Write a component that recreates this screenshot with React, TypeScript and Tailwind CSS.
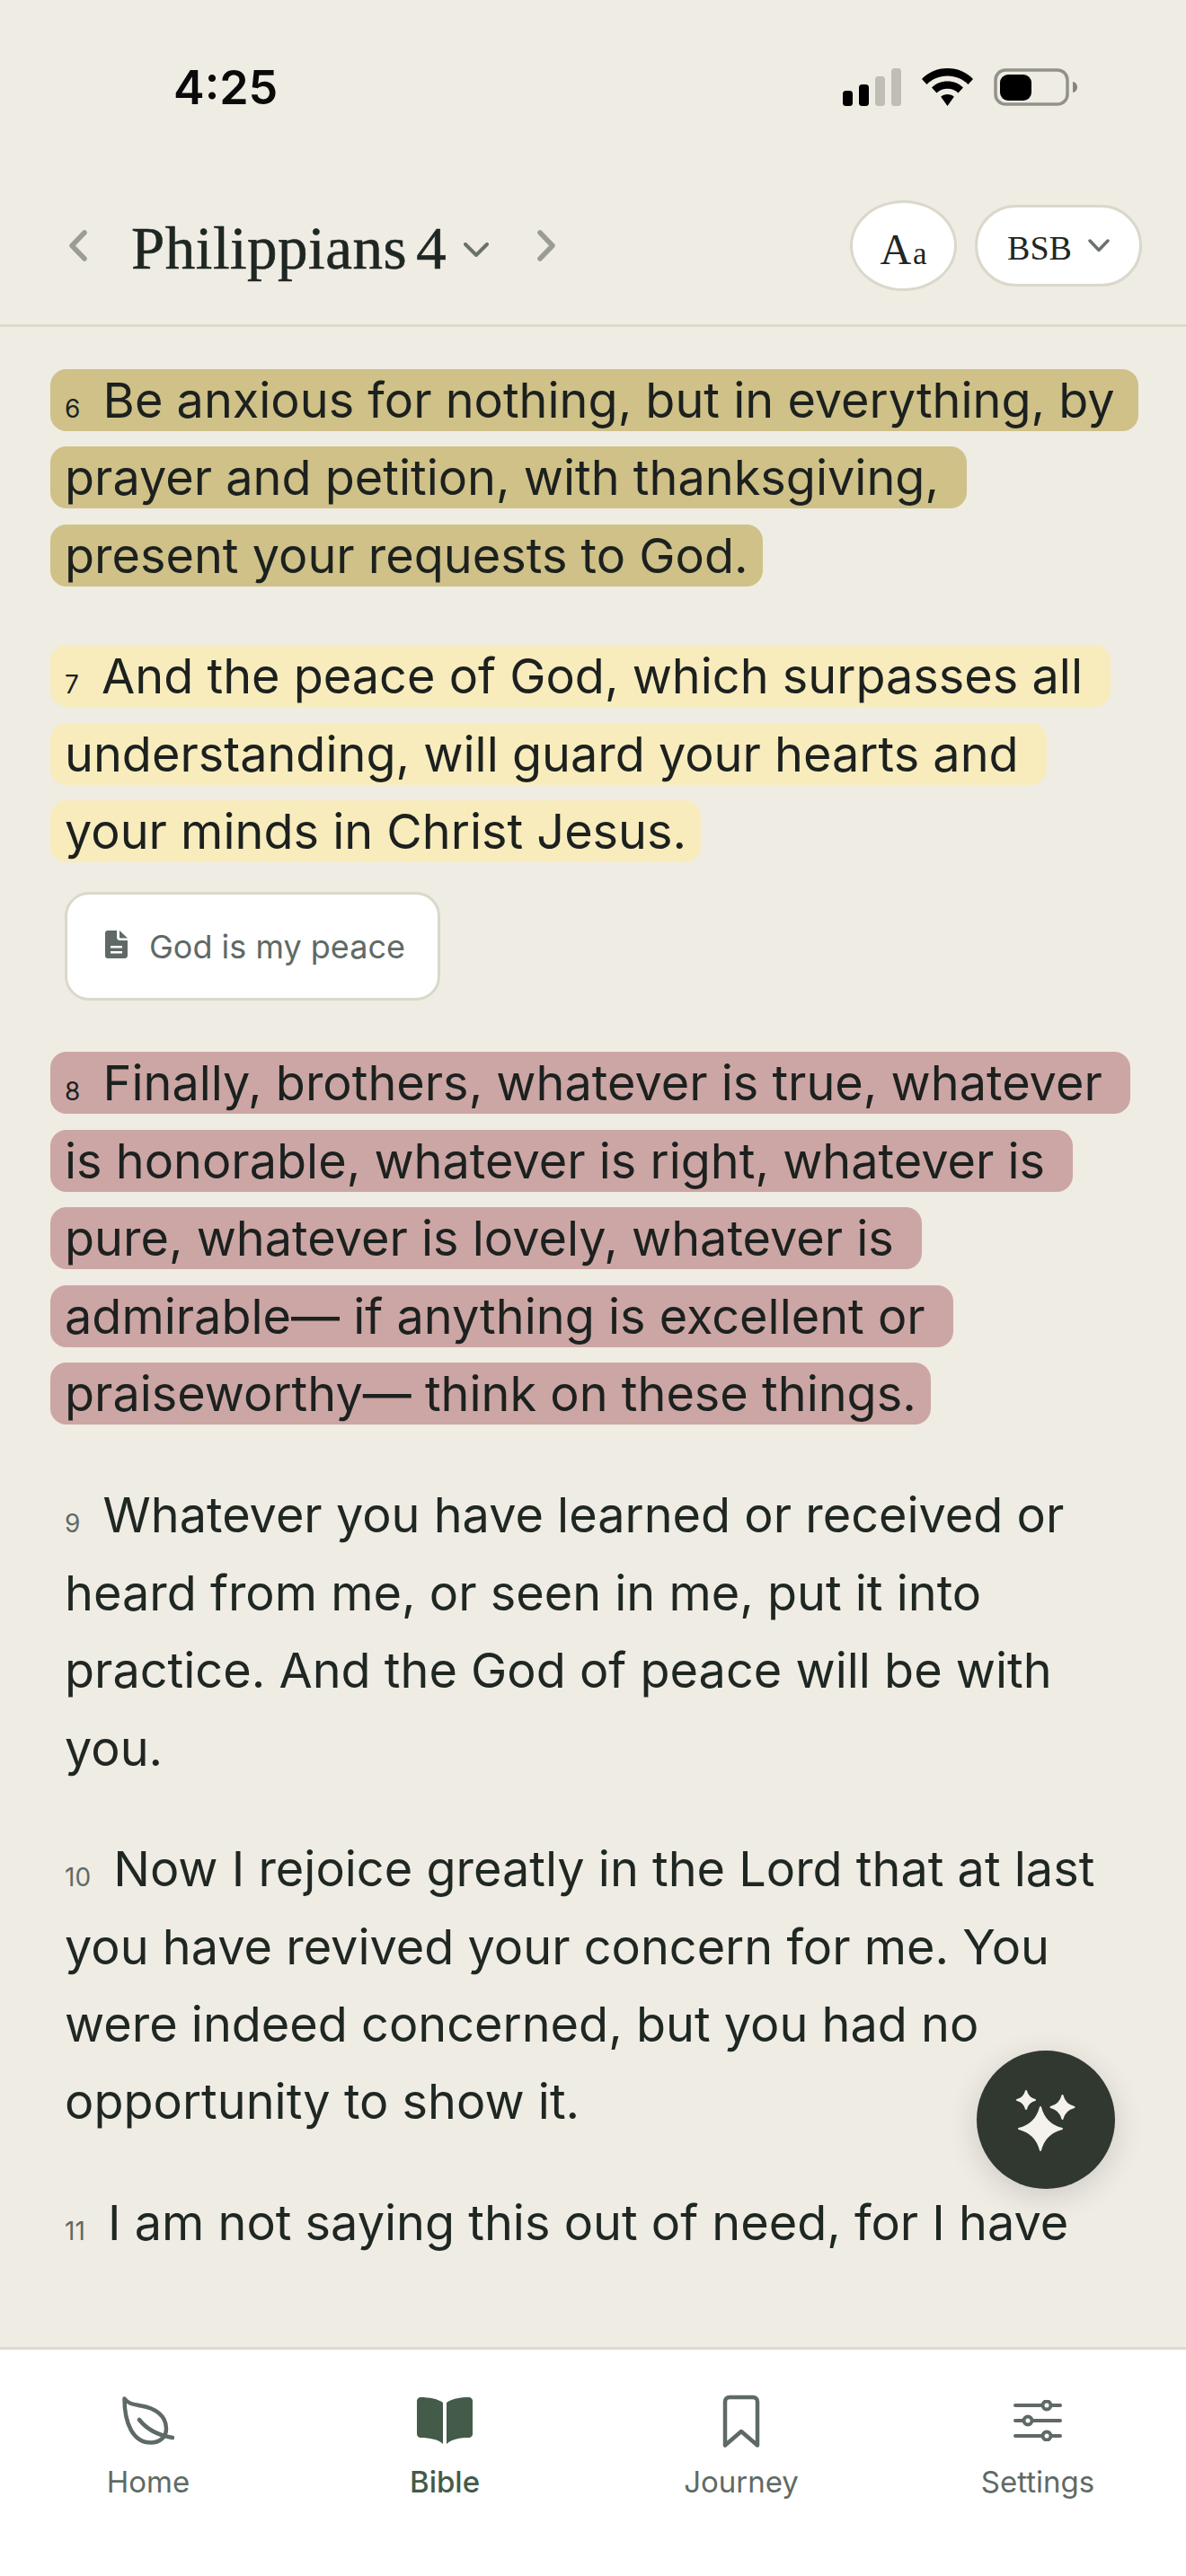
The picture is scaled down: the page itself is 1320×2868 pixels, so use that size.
function Star({ cx, cy, r }: { cx: number; cy: number; r: number }) {
  const k = r * 0.2;
  return (
    <path
      d={`M${cx} ${cy - r} Q${cx + k} ${cy - k} ${cx + r} ${cy} Q${cx + k} ${cy + k} ${cx} ${cy + r} Q${cx - k} ${cy + k} ${cx - r} ${cy} Q${cx - k} ${cy - k} ${cx} ${cy - r}Z`}
      strokeWidth="2"
      stroke="#f4f2ea"
      strokeLinejoin="round"
    />
  );
}

// highlighted verses keep the line breaks of the page, with the trailing space inside the tint
function Marked({ num, lines, mark }: { num: number; lines: string[]; mark: string }) {
  return (
    <p className="-mx-4 whitespace-nowrap text-[#1c211f]">
      {lines.map((line, i) => (
        <span key={i}>
          <span className={`rounded-[18px] px-4 py-[2px] ${mark}`}>
            {i === 0 && <span className="mr-[10px] text-[28px] leading-none">{num}</span>}
            {i === 0 && " "}
            {line}
          </span>
          {i < lines.length - 1 && <br />}
        </span>
      ))}
    </p>
  );
}

function Verse({ num, children }: { num: number; children: React.ReactNode }) {
  return (
    <p className="mb-[48px]">
      <span className="mr-[10px] text-[28px] leading-none text-[#5f6a65]">{num}</span> {children}
    </p>
  );
}

function Tab({ label, active, children }: { label: string; active?: boolean; children: React.ReactNode }) {
  return (
    <div className={`flex flex-col items-center ${active ? "font-medium text-[#445b49]" : "font-normal text-[#5f6a65]"}`}>
      <div className="flex h-[62px] items-center justify-center">{children}</div>
      <span className="mt-[17px] text-[33px] leading-[40px]">{label}</span>
    </div>
  );
}

export default function App() {
  return (
    <div className="flex h-[2868px] w-[1320px] flex-col overflow-hidden bg-[#efece4] font-['Inter',sans-serif]">
      {/* status bar */}
      <div className="flex h-[223px] shrink-0 items-start justify-between pt-[65px] pr-[121px] pl-[193px]">
        <span className="text-[52px] leading-[65px] font-semibold text-[#0a0a0a]">4:25</span>
        <div className="flex items-center pt-[11px]">
          <svg width="65" height="42" viewBox="0 0 65 42">
            <rect x="0" y="25" width="11" height="17" rx="3.5" fill="#000" />
            <rect x="18" y="18" width="11" height="24" rx="3.5" fill="#000" />
            <rect x="36" y="9" width="11" height="33" rx="3.5" fill="#c0bdb5" />
            <rect x="54" y="0" width="11" height="42" rx="3.5" fill="#c0bdb5" />
          </svg>
          <svg className="ml-[23px]" width="57" height="42" viewBox="0 0 57 42">
            <path d="M28.5 0C40 0 50 4.5 57 12L51.5 18C45.5 12 37.5 8.5 28.5 8.5S11.500 12 5.500 18L0 12C7 4.500 17 0 28.500 0Z" fill="#000" />
            <path d="M28.500 14.500C35.500 14.500 41.500 17 46 21.500L40.500 27.500C37.500 24.500 33.300 22.800 28.500 22.800S19.500 24.500 16.500 27.500L11 21.500C15.500 17 21.500 14.500 28.500 14.500Z" fill="#000" />
            <path d="M28.500 29C31.500 29 34 30 35.800 31.800L28.500 42L21.200 31.800C23 30 25.500 29 28.500 29Z" fill="#000" />
          </svg>
          <svg className="ml-[23px]" width="93" height="42" viewBox="0 0 93 42">
            <rect x="2" y="2" width="80" height="38" rx="11" fill="none" stroke="#92928a" strokeWidth="3.500" />
            <rect x="7" y="7" width="35" height="29" rx="9" fill="#000" />
            <path d="M88 15C91 15.500 93 18 93 21S91 26.500 88 27Z" fill="#858580" />
          </svg>
        </div>
      </div>

      {/* header */}
      <div className="flex h-[141px] shrink-0 items-start justify-between border-b-[3px] border-[#dcdbce] pr-[49px] pl-[77px]">
        <div className="flex h-[101px] items-center">
          <svg width="20" height="35" viewBox="0 0 20 35" fill="none" stroke="#9a9d94" strokeWidth="5.500" strokeLinecap="round" strokeLinejoin="round">
            <polyline points="17,3 3,17.500 17,32" />
          </svg>
          <span className="mt-[5px] ml-[49px] font-['Liberation_Serif',serif] text-[67px] leading-[80px] tracking-[0.5px] text-[#1f2723] [word-spacing:-7px] [-webkit-text-stroke:0.6px_#1f2723]">Philippians 4</span>
          <svg className="mt-[8px] ml-[19px]" width="28" height="16" viewBox="0 0 28 16" fill="none" stroke="#6b726c" strokeWidth="4" strokeLinecap="round" strokeLinejoin="round">
            <polyline points="2,2 14,14 26,2" />
          </svg>
          <svg className="ml-[54px]" width="20" height="35" viewBox="0 0 20 35" fill="none" stroke="#9a9d94" strokeWidth="5.500" strokeLinecap="round" strokeLinejoin="round">
            <polyline points="3,3 17,17.500 3,32" />
          </svg>
        </div>
        <div className="flex h-[101px] items-center gap-[20px]">
          <div className="flex h-[101px] w-[119px] items-baseline justify-center rounded-[50%] border-[3px] border-[#d9d8cb] bg-white pt-[27px] font-['Liberation_Serif',serif] text-[#1f2723]">
            <span className="text-[48px] leading-[50px]">A</span>
            <span className="ml-[2px] text-[35px] leading-[50px]">a</span>
          </div>
          <div className="flex h-[91px] w-[186px] items-center justify-center gap-[18px] rounded-full border-[3px] border-[#d9d8cb] bg-white font-['Liberation_Serif',serif] text-[38px] text-[#1f2723]">
            <span className="mt-[5px]">BSB</span>
            <svg width="24" height="15" viewBox="0 0 24 15" fill="none" stroke="#6b726c" strokeWidth="3.500" strokeLinecap="round" strokeLinejoin="round">
              <polyline points="2,2 12,12.500 22,2" />
            </svg>
          </div>
        </div>
      </div>

      {/* chapter text */}
      <div className="relative flex-1 overflow-hidden px-[72px] pt-[39px] text-[54px] leading-[86.4px] text-[#1f2723]">
        <div className="mb-[48px]">
          <Marked
            num={6}
            mark="bg-[#cfc188]"
            lines={[
              "Be anxious for nothing, but in everything, by\u2009",
              "prayer and petition, with thanksgiving,\u00a0",
              "present your requests to God.",
            ]}
          />
        </div>
        <div className="mb-[49px]">
          <Marked
            num={7}
            mark="bg-[#f8ecbd]"
            lines={[
              "And the peace of God, which surpasses all\u00a0",
              "understanding, will guard your hearts and\u00a0",
              "your minds in Christ Jesus.",
            ]}
          />
          <div className="mt-[24px] flex h-[121px] w-[418px] items-center gap-[24px] rounded-[27px] border-[3px] border-[#d9d8cb] bg-white pl-[42px]">
            <svg width="25" height="31" viewBox="0 0 25 31" fill="#5f6a65" className="-mt-[4px]">
              <path fillRule="evenodd" d="M3 0H13V8C13 10 15 11 16 11H25V28C25 30 23 31 22 31H3C1 31 0 30 0 28V3C0 1 1 0 3 0ZM6 17V19.500H19V17ZM6 23V25.500H19V23Z" />
              <path d="M16 0L25 8.500H17C16.500 8.500 16 8 16 7.500Z" />
            </svg>
            <span className="text-[36px] leading-[44px] text-[#5f6a65]">God is my peace</span>
          </div>
        </div>
        <div className="mb-[49px]">
          <Marked
            num={8}
            mark="bg-[#cca6a4]"
            lines={[
              "Finally, brothers, whatever is true, whatever\u00a0",
              "is honorable, whatever is right, whatever is\u00a0",
              "pure, whatever is lovely, whatever is\u00a0",
              "admirable— if anything is excellent or\u00a0",
              "praiseworthy— think on these things.",
            ]}
          />
        </div>
        <Verse num={9}>
          Whatever you have learned or received or heard from me, or seen in me, put it into practice. And the God of peace will be with you.
        </Verse>
        <Verse num={10}>
          Now I rejoice greatly in the Lord that at last you have revived your concern for me. You were indeed concerned, but you had no opportunity to show it.
        </Verse>
        <Verse num={11}>I am not saying this out of need, for I have</Verse>

        {/* ask button */}
        <div className="absolute right-[79px] bottom-[176px] flex h-[154px] w-[154px] items-center justify-center rounded-full bg-[#303830] shadow-[0_8px_32px_rgba(48,56,48,0.18)]">
          <svg width="80" height="80" viewBox="0 0 80 80" fill="#f4f2ea">
            <Star cx={34} cy={50} r={24} />
            <Star cx={18} cy={18} r={10} />
            <Star cx={58.500} cy={26} r={13} />
          </svg>
        </div>
      </div>

      {/* tab bar */}
      <div className="grid h-[255px] shrink-0 grid-cols-4 border-t-[3px] border-[#dcdbce] bg-white pt-[48px]">
        <Tab label="Home">
          <svg width="58" height="54" viewBox="0 0 58 54" fill="none" stroke="#5f6a65" strokeWidth="4.500" strokeLinecap="round" strokeLinejoin="round">
            <path d="M2.500 2.500C7 9 14 9 21 10.500C36 13 49 21 49 36C49 46 41 51.500 32 51.500C12 51.500 2.500 30 2.500 2.500Z" />
            <path d="M19 26C26 35 38 43 56 46" />
          </svg>
        </Tab>
        <Tab label="Bible" active>
          <svg width="62" height="52" viewBox="0 0 62 52" fill="#445b49">
            <path d="M4 0C14 0 24 2 29 6V52C24 47 14 45 4 45C2 45 0 43 0 41V4C0 2 2 0 4 0Z" />
            <path d="M58 0C48 0 38 2 33 6V52C38 47 48 45 58 45C60 45 62 43 62 41V4C62 2 60 0 58 0Z" />
          </svg>
        </Tab>
        <Tab label="Journey">
          <svg width="42" height="59" viewBox="0 0 42 59" fill="none" stroke="#5f6a65" strokeWidth="4.500" strokeLinecap="round" strokeLinejoin="round">
            <path d="M3 56.500V8C3 5 5 3 8 3H34C37 3 39 5 39 8V56.500L21 41Z" />
          </svg>
        </Tab>
        <Tab label="Settings">
          <svg width="54" height="46" viewBox="0 0 54 46" fill="none" stroke="#5f6a65" strokeWidth="4" strokeLinecap="round">
            <path d="M2 6H52M2 23H52M2 40H52" />
            <circle cx="37" cy="6" r="4.500" fill="#fff" />
            <circle cx="16" cy="23" r="4.500" fill="#fff" />
            <circle cx="37" cy="40" r="4.500" fill="#fff" />
          </svg>
        </Tab>
      </div>
    </div>
  );
}
